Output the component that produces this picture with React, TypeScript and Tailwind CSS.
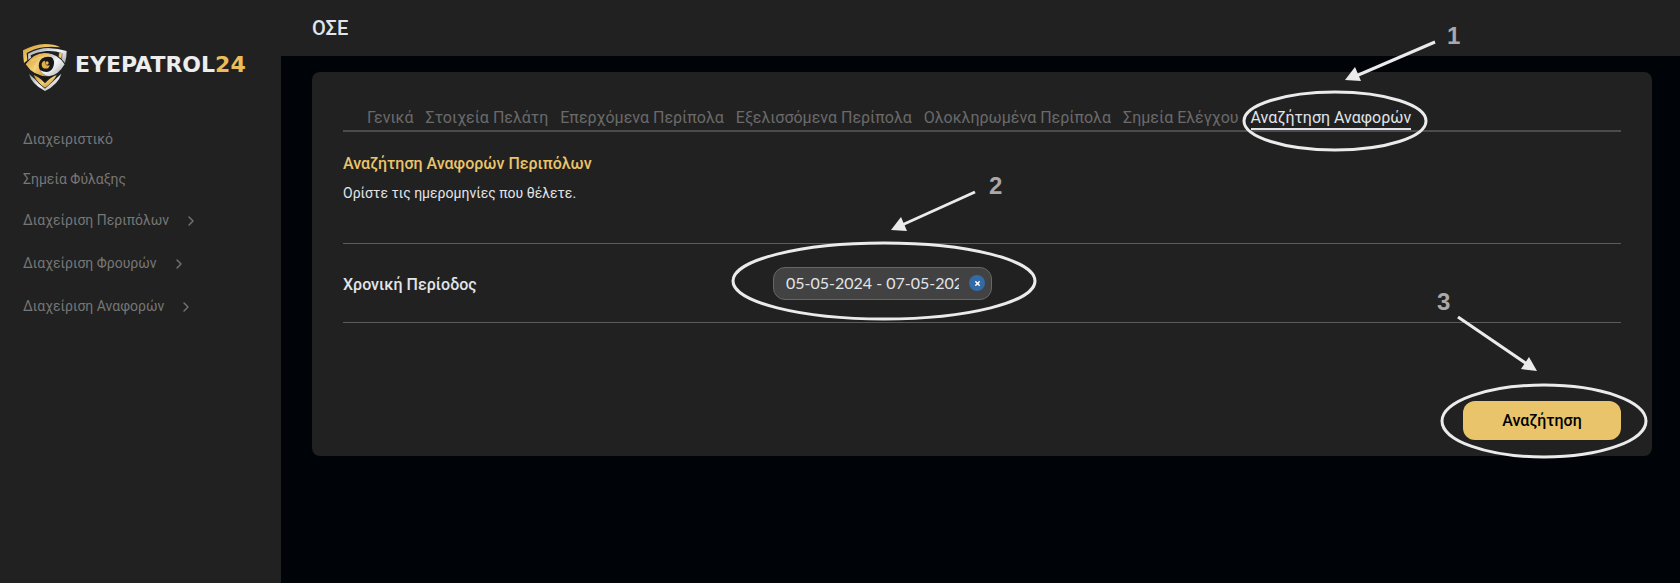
import { useState } from "react";
import { ChevronRight, X } from "lucide-react";

const menu = [
  { label: "Διαχειριστικό", nested: false },
  { label: "Σημεία Φύλαξης", nested: false },
  { label: "Διαχείριση Περιπόλων", nested: true },
  { label: "Διαχείριση Φρουρών", nested: true },
  { label: "Διαχείριση Αναφορών", nested: true },
];

const tabs = [
  "Γενικά",
  "Στοιχεία Πελάτη",
  "Επερχόμενα Περίπολα",
  "Εξελισσόμενα Περίπολα",
  "Ολοκληρωμένα Περίπολα",
  "Σημεία Ελέγχου",
  "Αναζήτηση Αναφορών",
];

function ShieldLogo() {
  return (
    <svg className="h-12 w-11 shrink-0" viewBox="0 0 132 144" aria-hidden="true">
      <defs>
        <linearGradient id="gold" x1="0" y1="0" x2="1" y2="1">
          <stop offset="0" stopColor="#d49a2c" />
          <stop offset="0.5" stopColor="#f3cf74" />
          <stop offset="1" stopColor="#b87f22" />
        </linearGradient>
        <linearGradient id="silver" x1="0" y1="0" x2="1" y2="1">
          <stop offset="0" stopColor="#8f949a" />
          <stop offset="0.5" stopColor="#f4f5f6" />
          <stop offset="1" stopColor="#a3a7ac" />
        </linearGradient>
      </defs>
      {/* top edge */}
      <path d="M0 22Q34 4 66 3Q92 3 112 13Q84 9 62 13Q34 17 11 30L13 52L3 60Q0 42 0 22Z" fill="url(#gold)" />
      <path d="M15 32Q46 15 76 15Q106 16 131 24Q131 44 126 60L117 50L118 31Q96 22 70 24Q42 27 23 37L24 45L16 51Z" fill="url(#silver)" />
      <path d="M108 28L117 31L116 49L107 41Z" fill="url(#gold)" />
      {/* lower point */}
      <path d="M18 93Q36 107 48 122L66 137L85 120Q100 106 115 92Q106 124 66 144Q26 124 18 93Z" fill="url(#silver)" />
      <path d="M32 96Q48 101 66 121Q84 101 101 96Q92 116 66 134Q42 118 32 96Z" fill="url(#gold)" />
      <path d="M48 100H84L66 116Z" fill="#17181a" />
      {/* eye */}
      <path d="M6 64Q30 28 64 27Q104 28 127 64Q104 101 66 103Q30 101 6 64Z" fill="#17181a" />
      <path d="M8 64Q32 30 66 30Q84 31 93 45Q70 36 56 47Q43 60 49 77Q56 94 77 100Q32 101 8 64Z" fill="url(#gold)" />
      <path d="M70 30Q104 32 125 64Q105 98 78 100Q58 96 51 81Q75 94 88 77Q98 60 89 46Q82 36 70 30Z" fill="url(#silver)" />
      <path d="M24 55Q45 42 62 41M34 80Q38 58 50 50M98 45Q105 63 91 79M111 55Q106 76 78 89" fill="none" stroke="#fff" strokeOpacity="0.45" strokeWidth="2" />
      <circle cx="68" cy="65" r="18" fill="#17181a" />
      <path d="M66 53A12 12 0 1 0 80 66Q73 70 69 65Q64 60 66 53Z" fill="#e3b04a" />
      <circle cx="72" cy="60" r="5" fill="#e7b951" />
    </svg>
  );
}

function Sidebar() {
  return (
    <aside className="w-[281px] shrink-0 bg-[#212121] px-[23px] pt-[43px]">
      <a href="#" className="flex items-center gap-2">
        <ShieldLogo />
        <span className="pb-1 font-['DejaVu_Sans'] text-[22px] leading-6 font-bold text-[#ededed]">
          EYEPATROL<span className="text-[#e9bd5b]">24</span>
        </span>
      </a>
      <nav className="mt-7 flex flex-col">
        {menu.map(({ label, nested }) => (
          <a
            key={label}
            href="#"
            className={`flex items-center gap-3.5 text-[14px] text-[#767676] ${nested ? "h-[43px]" : "h-10"}`}
          >
            {label}
            {nested && <ChevronRight size={16} strokeWidth={2} />}
          </a>
        ))}
      </nav>
    </aside>
  );
}

function TabMark() {
  return (
    <svg
      className="pointer-events-none absolute -top-[84px] -left-[10px] h-[140px] w-[230px]"
      viewBox="1240 20 230 140"
      aria-hidden="true"
    >
      <ellipse cx="1334" cy="121" rx="91" ry="29" fill="none" stroke="#ebebeb" strokeWidth="3" />
      <path d="M1434 42L1355 76" stroke="#ebebeb" strokeWidth="3" />
      <path d="M1344 80L1354 67L1360 81Z" fill="#ebebeb" />
      <text x="1446" y="44" className="text-[24px] font-bold" fill="#a9a9a9" fontFamily="Liberation Sans, sans-serif">1</text>
    </svg>
  );
}

function PeriodMark() {
  return (
    <svg
      className="pointer-events-none absolute -top-[97px] -left-[43px] h-[155px] w-[310px]"
      viewBox="730 170 310 155"
      aria-hidden="true"
    >
      <ellipse cx="884" cy="281" rx="151" ry="38" fill="none" stroke="#ebebeb" strokeWidth="3" />
      <path d="M975 192L902 225" stroke="#ebebeb" strokeWidth="3" />
      <path d="M891 230L901 217L907 231Z" fill="#ebebeb" />
      <text x="989" y="194" className="text-[24px] font-bold" fill="#a9a9a9" fontFamily="Liberation Sans, sans-serif">2</text>
    </svg>
  );
}

function SubmitMark() {
  return (
    <svg
      className="pointer-events-none absolute -top-[116px] -right-[29px] h-[175px] w-[220px]"
      viewBox="1430 285 220 175"
      aria-hidden="true"
    >
      <ellipse cx="1544" cy="421" rx="102" ry="36" fill="none" stroke="#ebebeb" strokeWidth="3" />
      <path d="M1458 317L1527 364" stroke="#ebebeb" strokeWidth="3" />
      <path d="M1537 371L1521 369L1529 357Z" fill="#ebebeb" />
      <text x="1437" y="310" className="text-[24px] font-bold" fill="#a9a9a9" fontFamily="Liberation Sans, sans-serif">3</text>
    </svg>
  );
}

export default function App() {
  const [activeTab, setActiveTab] = useState("Αναζήτηση Αναφορών");
  const [period, setPeriod] = useState("05-05-2024 - 07-05-2024");

  return (
    <div className="flex min-h-screen bg-[#000408] font-['Roboto',sans-serif] text-[#e2e4ea]">
      <Sidebar />
      <div className="min-w-0 flex-1">
        <header className="flex h-14 items-center bg-[#212121] px-[31px]">
          <h1 className="text-[20px] font-medium">ΟΣΕ</h1>
        </header>
        <main className="pt-4 pr-7 pl-[31px]">
          <section className="rounded-lg bg-[#212121] px-[31px] pt-8 pb-4">
            <div role="tablist" className="flex gap-3 border-b-2 border-[#4c4c4c] pl-6">
              {tabs.map((tab) => (
                <div key={tab} className="relative">
                  <button
                    type="button"
                    role="tab"
                    aria-selected={tab === activeTab}
                    onClick={() => setActiveTab(tab)}
                    className={`block h-[26px] border-b-2 pt-1 text-[16px] leading-5 whitespace-nowrap ${
                      tab === activeTab ? "border-[#e2e4ea]" : "border-transparent text-[#6a6a6a]"
                    }`}
                  >
                    {tab}
                  </button>
                  {tab === "Αναζήτηση Αναφορών" && <TabMark />}
                </div>
              ))}
            </div>

            <h2 className="mt-5 text-[16px] leading-6 font-medium text-[#e9c46a]">Αναζήτηση Αναφορών Περιπόλων</h2>
            <p className="mt-[7px] text-[14px] leading-5">Ορίστε τις ημερομηνίες που θέλετε.</p>

            <form onSubmit={(e) => e.preventDefault()}>
              <div className="mt-10 grid h-20 grid-cols-3 items-center gap-3 border-y border-[#5c5c5c]">
                <label htmlFor="period" className="pt-1 text-[16px] font-medium">
                  Χρονική Περίοδος
                </label>
                <div className="relative w-[219px]">
                  <div className="flex h-[33px] items-center gap-2.5 rounded-xl border border-[#666] bg-[#424242] pr-1.5 pl-3">
                    <input
                      id="period"
                      type="text"
                      value={period}
                      onChange={(e) => setPeriod(e.target.value)}
                      className="min-w-0 flex-1 bg-transparent font-['Lato'] text-[16px] outline-none"
                    />
                    <button
                      type="button"
                      aria-label="Καθαρισμός"
                      onClick={() => setPeriod("")}
                      className="flex size-4 shrink-0 items-center justify-center rounded-full bg-[#336aa8] text-white"
                    >
                      <X size={7} strokeWidth={5} />
                    </button>
                  </div>
                  <PeriodMark />
                </div>
              </div>
              <div className="mt-[78px] flex justify-end">
                <div className="relative">
                  <button
                    type="submit"
                    className="h-[39px] w-[158px] rounded-xl bg-[#e9c46a] text-[16px] font-medium text-black"
                  >
                    Αναζήτηση
                  </button>
                  <SubmitMark />
                </div>
              </div>
            </form>
          </section>
        </main>
      </div>
    </div>
  );
}
